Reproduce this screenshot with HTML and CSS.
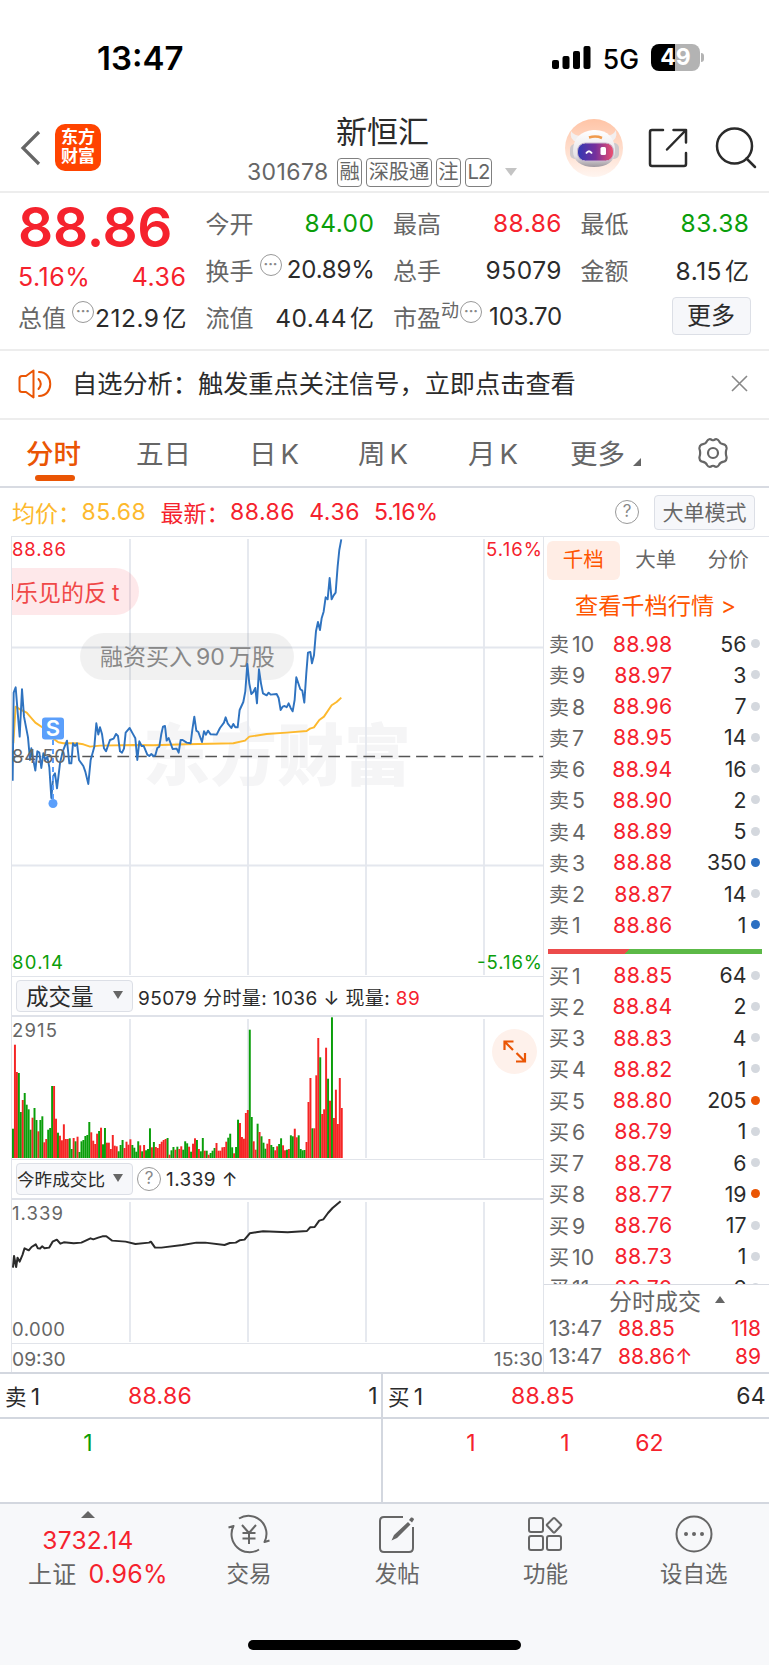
FILE: index.html
```
<!DOCTYPE html>
<html lang="zh-CN">
<head>
  <meta charset="UTF-8" />
  <meta name="viewport" content="width=device-width, initial-scale=1.0"/>
  <title>新恒汇 301678</title>
  <link rel="stylesheet" href="styles.css">
</head>
<body>
  <div class="status-bar">
    <span class="clock">13:47</span>
    <div class="status-right">
      <svg width="39" height="23" viewBox="0 0 39 23">
        <rect x="0" y="14" width="7" height="9" rx="2"/>
        <rect x="10.5" y="10" width="7" height="13" rx="2"/>
        <rect x="21" y="5" width="7" height="18" rx="2"/>
        <rect x="31.5" y="0" width="7" height="23" rx="2"/>
      </svg>
      <span class="network">5G</span>
      <div class="battery"><span>49</span></div>
      <i class="battery-tip"></i>
    </div>
  </div>

  <header>
    <svg class="back" width="22" height="36" viewBox="0 0 22 36" fill="none" stroke="#666" stroke-width="3.2"><path d="M19 2L3 18L19 34"/></svg>
    <div class="logo">东方<br>财富</div>
    <div class="stock">
      <h1>新恒汇</h1>
      <div class="stock-info">
        <span class="code">301678</span>
        <span class="tag">融</span>
        <span class="tag">深股通</span>
        <span class="tag">注</span>
        <span class="tag tag-l2">L2</span>
        <i class="caret"></i>
      </div>
    </div>
    <svg class="robot" width="60" height="60" viewBox="0 0 60 60">
      <defs>
        <linearGradient id="halo" x2="0" y2="1"><stop stop-color="#ffc4a6"/><stop offset="1" stop-color="#fff5f0"/></linearGradient>
        <linearGradient id="visor"><stop stop-color="#3039b4"/><stop offset=".5" stop-color="#76309c"/><stop offset="1" stop-color="#ef506d"/></linearGradient>
        <linearGradient id="helmet" x2="0" y2="1"><stop stop-color="#fff"/><stop offset=".7" stop-color="#e6e3e6"/><stop offset="1" stop-color="#9f989f"/></linearGradient>
      </defs>
      <circle cx="30" cy="30" r="29" fill="url(#halo)"/>
      <path d="M7 13Q5 22 13 24L18 18Q10 18 7 13M52 12Q54 22 46 24L41 18Q49 18 52 12" fill="#f3efef"/>
      <rect x="6" y="26" width="10" height="15" rx="5" fill="#cdc9cc"/>
      <rect x="45" y="25" width="10" height="16" rx="5" fill="#cdc9cc"/>
      <path d="M29 12C43 11 51 20 51 32C51 44 43 49 30 49C17 49 9 43 9 33C9 20 17 13 29 12Z" fill="url(#helmet)"/>
      <path d="M25 19.500Q32 17.500 38 20" stroke="#f09b4d" stroke-width="2.500" fill="none"/>
      <rect x="13.500" y="25" width="36" height="18" rx="8" fill="url(#visor)" stroke="#c8b8ce"/>
      <path d="M22 35.500Q25 31 28 35.500" stroke="#fff" stroke-width="1.800" fill="none"/>
      <rect x="36.500" y="29" width="5.500" height="8" rx="1.500" fill="#fff"/>
    </svg>
    <svg class="share" width="40" height="40" viewBox="0 0 40 40" fill="none" stroke="#2b2b2b" stroke-width="2.500" stroke-linecap="round" stroke-linejoin="round"><path d="M15 2H4Q2 2 2 4V36Q2 38 4 38H36Q38 38 38 36V25M25.500 2H38V14.500M38 2L19 21.500"/></svg>
    <svg class="search" width="42" height="42" viewBox="0 0 42 42" fill="none" stroke="#2b2b2b" stroke-width="2.500" stroke-linecap="round"><circle cx="19.500" cy="19" r="17.500"/><path d="M31.500 31.500L40 40"/></svg>
  </header>

  <section class="quote">
    <div class="quote-col">
      <div class="price">88.86</div>
      <div class="line change"><span>5.16%</span><span>4.36</span></div>
      <div class="line"><label>总值<i class="more-dot">···</i></label><b>212.9<em>亿</em></b></div>
    </div>
    <div class="quote-col">
      <div class="line"><label>今开</label><b class="green">84.00</b></div>
      <div class="line"><label>换手<i class="more-dot">···</i></label><b class="narrow">20.89%</b></div>
      <div class="line"><label>流值</label><b>40.44<em>亿</em></b></div>
    </div>
    <div class="quote-col">
      <div class="line"><label>最高</label><b class="red">88.86</b></div>
      <div class="line"><label>总手</label><b>95079</b></div>
      <div class="line"><label>市盈<sup>动</sup><i class="more-dot tight">···</i></label><b class="narrow">103.70</b></div>
    </div>
    <div class="quote-col">
      <div class="line"><label>最低</label><b class="green">83.38</b></div>
      <div class="line"><label>金额</label><b>8.15<em>亿</em></b></div>
      <button class="btn-more">更多</button>
    </div>
  </section>

  <div class="notice">
    <svg width="34" height="30" viewBox="0 0 34 30" fill="none" stroke="#ea5504" stroke-width="2" stroke-linejoin="round" stroke-linecap="round"><path d="M15.500 1.500L8 7H4Q1.500 7 1.500 9.500V20.500Q1.500 23 4 23H8L15.500 28.500ZM20.500 10Q25 15 20.500 20M21 3C36 3 36 27 21 27"/></svg>
    <span>自选分析：触发重点关注信号，立即点击查看</span>
    <svg class="close" width="17" height="17" viewBox="0 0 17 17" stroke="#888" stroke-width="1.600"><path d="M1 1L16 16M16 1L1 16"/></svg>
  </div>

  <nav class="tabs">
    <a class="active">分时</a>
    <a>五日</a>
    <a>日<span>K</span></a>
    <a>周<span>K</span></a>
    <a>月<span>K</span></a>
    <a class="tab-more">更多<i></i></a>
    <svg width="34" height="32" viewBox="0 0 34 32" fill="none" stroke="#666" stroke-width="2.200" stroke-linejoin="round"><circle cx="17" cy="16" r="5"/><path d="M11 4Q13 1 16 3Q17 3.500 18 3Q21 1 23 4C24 7 26 7 28.500 7.500Q31 9 30.500 12C29.500 15 29.500 17 30.500 20Q31 23 28.500 24.500C26 25 24 25 23 28Q21 31 18 29Q17 28.500 16 29Q13 31 11 28C10 25 8 25 5.500 24.500Q3 23 3.500 20C4.500 17 4.500 15 3.500 12Q3 9 5.500 7.500C8 7 10 7 11 4Z"/></svg>
  </nav>

  <div class="legend">
    <span class="avg name">均价：</span><span class="avg num">85.68</span>
    <span class="red name">最新：</span><span class="red num">88.86</span>
    <span class="red num">4.36</span><span class="red num">5.16%</span>
    <i class="help">?</i>
    <button class="btn-mode">大单模式</button>
  </div>

  <main>
    <div class="charts">
      <!-- 分时走势 -->
      <svg class="chart price-chart" width="531" height="439" viewBox="0 0 531 439">
        <text class="watermark" x="131" y="243" textLength="268">东方财富</text>
        <path class="grid" d="M118 2V438M236 2V438M354 2V438M472 2V438M0 110.500H531M0 328.500H531"/>
        <path class="base-line" d="M0 219.500H531"/>
        <polyline class="avg-line" transform="translate(-12 -7) scale(.3333)" points="40,640 47,530 60,538 80,548 106,578 130,594 150,606 160,626 175,637 190,640 230,640 250,643 270,650 300,647 400,645 460,646 560,643 700,640 735,632 748,620 800,612 860,608 920,603 930,596 942,592 958,570 972,560 995,526 1010,516 1024,503"/>
        <rect x="68" y="96" width="214" height="47" rx="23.500" fill="#000" fill-opacity=".055"/>
        <text class="bubble-text" x="88" y="127.500">融资买入<tspan dx="4">90</tspan><tspan dx="4">万股</tspan></text>
        <path d="M0 31H103.500A23.500 23.500 0 0 1 103.500 78H0Z" fill="#f5222d" fill-opacity=".1"/>
        <text class="bubble-text red-text" x="3" y="63.500">乐见的反<tspan dx="5">t</tspan></text>
        <path d="M.500 47V63" stroke="#f04848" stroke-width="1.200"/>
        <polyline class="price-line" transform="translate(-12 -7) scale(.3333)" points="38,752 41,488 47,472 59,620 66,478 72,560 84,622 90,690 94,655 100,690 106,722 112,664 118,668 124,714 130,670 136,690 142,680 148,712 154,804 160,738 165,730 171,775 180,700 188,665 201,632 208,700 214,700 219,640 225,648 231,640 237,690 250,708 256,725 265,762 272,690 283,650 289,580 295,614 300,592 306,612 312,655 318,664 330,630 341,626 348,612 354,618 360,664 366,668 372,656 377,608 389,594 400,614 406,625 412,690 418,634 425,648 431,648 442,674 448,678 454,672 460,678 466,676 472,654 478,650 484,612 489,590 495,588 500,632 506,624 512,640 518,657 530,656 536,668 542,630 548,630 560,638 572,640 577,600 583,560 589,602 595,606 606,636 612,604 618,614 624,602 632,613 650,614 660,594 672,578 677,562 683,580 694,594 700,582 706,592 713,592 719,540 730,516 736,484 742,402 748,460 754,492 760,486 766,474 771,520 777,418 783,460 789,490 800,496 806,488 812,494 830,492 836,504 842,540 848,530 854,528 860,532 866,520 872,534 878,544 884,510 889,442 901,478 907,482 913,518 919,430 924,368 931,366 936,400 942,376 948,304 954,276 960,300 965,265 971,245 977,202 983,208 989,144 995,208 1001,196 1007,188 1013,110 1018,60 1024,28"/>
        <path d="M41 203V262" stroke="#5b9ffb" stroke-width="2" stroke-dasharray="5 4"/>
        <circle cx="41" cy="266.500" r="4.500" fill="#5b9ffb"/>
        <rect x="30" y="180.500" width="22" height="22" rx="3" fill="#5b9ffb"/>
        <text class="sell-mark" x="41" y="199">S</text>
        <text class="label red-text" x="0" y="18.700" textLength="54">88.86</text>
        <text class="label red-text" x="474" y="18.700" textLength="56">5.16%</text>
        <text class="label" x="0" y="226" textLength="54">84.50</text>
        <text class="label green-text" x="0" y="432" textLength="51">80.14</text>
        <text class="label green-text" x="465" y="432" textLength="65">-5.16%</text>
      </svg>

      <div class="indicator">
        <button class="select">成交量<i></i></button>
        <span class="ind-text">95079 分时量: 1036 ↓ 现量: <span class="red">89</span></span>
      </div>
      <!-- 成交量 -->
      <svg class="chart" width="531" height="142" viewBox="0 0 531 142">
        <path class="grid" d="M118 2V141M236 2V141M354 2V141M472 2V141"/>
        <text class="label" x="0" y="19.500" textLength="45">2915</text>
        <g id="volume"></g>
        <circle cx="502.500" cy="34.500" r="22.500" fill="#fef1eb"/>
        <path d="M492.500 33V24.500H501.500M492.500 24.500L501 33M513 36V44.500H504M513 44.500L504.500 36" fill="none" stroke="#ea5504" stroke-width="2.200"/>
      </svg>

      <div class="indicator second">
        <button class="select small">今昨成交比<i></i></button>
        <i class="help">?</i>
        <span class="ind-text">1.339 ↑</span>
      </div>
      <!-- 今昨成交比 -->
      <svg class="chart" width="531" height="143" viewBox="0 0 531 143">
        <path class="grid" d="M118 2V142M236 2V142M354 2V142M472 2V142"/>
        <polyline class="ratio-line" transform="translate(-12 -39) scale(.3508 .3333)" points="37,320 40,285 46,318 50,290 56,302 64,282 70,262 82,268 90,258 102,250 108,262 114,263 120,256 127,262 140,260 150,242 162,236 172,248 182,244 210,247 232,245 258,232 266,235 280,230 292,226 303,226 320,239 358,242 386,249 425,245 430,242 442,260 460,260 520,252 560,245 585,245 640,252 655,246 672,245 683,238 697,236 712,217 730,214 750,211 820,214 875,210 884,199 897,198 910,179 922,175 935,156 948,141 971,121"/>
        <text class="label" x="0" y="20" textLength="51">1.339</text>
        <text class="label" x="0" y="135.500" textLength="53">0.000</text>
      </svg>
      <div class="time-axis"><span>09:30</span><span>15:30</span></div>
    </div>

    <aside>
      <div class="book-tabs"><a class="active">千档</a><a>大单</a><a>分价</a></div>
      <a class="book-link">查看千档行情 <span>&gt;</span></a>
      <div class="book" id="sells"></div>
      <div class="ratio-bar"></div>
      <div class="book buys" id="buys"></div>
      <div class="deals">
        <div class="deals-title">分时成交<i></i></div>
        <div class="deal"><span>13:47</span><span class="red">88.85</span><span class="red qty">118</span></div>
        <div class="deal"><span>13:47</span><span class="red">88.86↑</span><span class="red qty">89</span></div>
      </div>
    </aside>
  </main>

  <section class="queue">
    <div class="side">
      <div class="side-head"><span>卖<em>1</em></span><span class="red">88.86</span><span class="qty">1</span></div>
      <div class="orders"><span></span><span class="green">1</span></div>
    </div>
    <div class="side">
      <div class="side-head"><span>买<em>1</em></span><span class="red">88.85</span><span class="qty">64</span></div>
      <div class="orders red"><span></span><span>1</span><span>1</span><span>62</span></div>
    </div>
  </section>

  <footer>
    <div class="index">
      <i></i>
      <div class="red">3732.14</div>
      <div class="index-change">上证<span class="red">0.96%</span></div>
    </div>
    <a>
      <svg width="44" height="40" viewBox="0 0 44 40"><path d="M12 4.500A18 18 0 0 1 37.500 28L42.500 26.500M32 35.500A18 18 0 0 1 6.500 12L1.500 13.500M15 11L22 19L29 11M22 19V30M15.500 19H28.500M15.500 24.500H28.500"/></svg>
      <span>交易</span>
    </a>
    <a>
      <svg width="44" height="40" viewBox="0 0 44 40"><path d="M28 3H9Q5 3 5 7V34Q5 38 9 38H34Q38 38 38 34V13"/><path class="pen" d="M36 3.500Q38.500 3 39 5.500L37 8.500L34 6ZM33 8L35.500 10.500L22 24L16.500 26.500L19 21Z"/></svg>
      <span>发帖</span>
    </a>
    <a>
      <svg width="44" height="40" viewBox="0 0 44 40"><rect x="6" y="4" width="14" height="14" rx="2"/><rect x="6" y="22" width="14" height="14" rx="2"/><rect x="24" y="22" width="14" height="14" rx="2"/><path d="M30 4.500Q31 3.500 32 4.500L38 10.500Q38.500 11 38 11.500L32 18Q31 19 30 18L24 11.500Q23.500 11 24 10.500Z"/></svg>
      <span>功能</span>
    </a>
    <a>
      <svg width="44" height="40" viewBox="0 0 44 40"><circle cx="22" cy="20" r="17.500"/><path class="dots" d="M14 20h.01M22 20h.01M30 20h.01"/></svg>
      <span>设自选</span>
    </a>
    <div class="home-bar"></div>
  </footer>

  <script src="app.js"></script>
</body>
</html>
```
FILE: styles.css
```
* {
  box-sizing: border-box;
}

body {
  margin: 0;
  width: 769px;
  height: 1665px;
  overflow: hidden;
  background-color: #ffffff;
  color: #2b2b2b;
  font-family: Inter, 'Noto Sans CJK SC', sans-serif;
}

i, em {
  font-style: normal;
}

button {
  font-family: inherit;
  padding: 0;
  color: #2b2b2b;
  background: #f6f7fa;
  border: 1.5px solid #dcdfe6;
  border-radius: 4px;
}

svg {
  display: block;
  flex: none;
}

.red { color: #f5222d; }
.green { color: #0a9e0a; }

/* 状态栏 */
.status-bar {
  display: flex;
  justify-content: space-between;
  align-items: center;
  height: 115px;
  padding: 0 65px 0 97px;
  color: #000;
}

.clock {
  font-size: 33px;
  font-weight: 600;
}

.status-right {
  display: flex;
  align-items: center;
}

.network {
  font-size: 26.5px;
  font-weight: 500;
  margin: 2px 12px 0 12px;
}

.battery {
  width: 49px;
  height: 27px;
  border-radius: 8px;
  background: linear-gradient(90deg, #000 49%, #b3b3b3 49%);
  color: #fff;
  font-size: 23px;
  font-weight: 700;
  line-height: 27px;
  text-align: center;
}

.battery-tip {
  width: 3px;
  height: 9px;
  margin-left: 1px;
  border-radius: 0 4px 4px 0;
  background: #b3b3b3;
}

/* 顶部 */
header {
  display: flex;
  height: 78px;
  border-bottom: 2px solid #ededed;
}

.back {
  margin: 15px 0 0 20px;
}

.logo {
  width: 46px;
  height: 47px;
  margin: 9px 0 0 13px;
  padding-top: 4px;
  border-radius: 10px;
  background: #ff4400;
  color: #fff;
  font-size: 17px;
  font-weight: 700;
  line-height: 19px;
  text-align: center;
}

.stock {
  width: 273px;
  margin-left: 146px;
}

h1 {
  margin: 0;
  width: 271px;
  height: 42px;
  font-size: 31px;
  font-weight: 400;
  line-height: 33px;
  text-align: center;
}

.stock-info {
  display: flex;
  align-items: center;
  gap: 4px;
  height: 30px;
  color: #666;
}

.code {
  font-size: 23px;
  width: 86px;
  letter-spacing: 0.4px;
}

.tag {
  height: 29px;
  padding: 0 1.5px;
  border: 1.5px solid #808080;
  border-radius: 4px;
  font-size: 20.3px;
  line-height: 25px;
  letter-spacing: -0.1px;
}

.tag-l2 {
  letter-spacing: -1px;
}

.caret {
  margin-left: 9px;
  border: 6.5px solid transparent;
  border-top: 8px solid #c4c4c4;
  border-bottom: 0;
}

.robot { margin: 3px 0 0 44px; }
.share { margin: 13px 0 0 24px; }
.search { margin: 12px 0 0 27px; }

/* 行情 */
.quote {
  display: grid;
  grid-template-columns: repeat(4, 168.5px);
  column-gap: 19px;
  height: 158px;
  padding: 6px 0 0 18px;
  border-bottom: 2px solid #ededed;
}

.line {
  display: flex;
  justify-content: space-between;
  align-items: center;
  height: 47px;
  font-size: 24px;
  white-space: nowrap;
}

.line label {
  display: flex;
  align-items: center;
  color: #666;
}

.line b {
  font-weight: 400;
  font-size: 24.5px;
  letter-spacing: 0.5px;
  margin-right: -0.5px;
}

.line b.narrow {
  font-size: 24px;
  letter-spacing: -0.2px;
}

.line em {
  margin-left: 3px;
  font-size: 24px;
}

.line sup {
  font-size: 18px;
  line-height: 18px;
  margin-bottom: 12px;
}

.price {
  height: 54px;
  color: #f5222d;
  font-size: 55px;
  font-weight: 600;
  line-height: 56px;
  letter-spacing: -0.3px;
}

.change {
  height: 40px;
  padding-top: 8px;
  color: #f5222d;
  font-size: 25px;
  letter-spacing: 0.5px;
}

.more-dot {
  width: 22px;
  height: 22px;
  margin: 0 0 10px 6px;
  border: 1.5px solid #999;
  border-radius: 50%;
  color: #888;
  font-size: 14px;
  font-weight: 700;
  line-height: 18px;
  text-align: center;
}

.more-dot.tight {
  margin-left: 1px;
}

.btn-more {
  display: block;
  width: 79px;
  height: 38px;
  margin: 4px 0 0 91px;
  font-size: 24px;
  line-height: 34px;
}

/* 提示条 */
.notice {
  display: flex;
  align-items: center;
  height: 69px;
  padding: 0 21px 2px 18px;
  border-bottom: 2px solid #ededed;
  font-size: 25.2px;
}

.notice span {
  margin: -3px 0 0 20px;
}

.close {
  margin-left: auto;
}

/* 周期切换 */
.tabs {
  display: flex;
  align-items: center;
  height: 68px;
  padding-left: 26px;
  border-bottom: 2px solid #d8dbe2;
  color: #666;
  font-size: 27.5px;
}

.tabs a {
  position: relative;
  top: -1px;
  width: 110px;
  white-space: nowrap;
}

.tabs a:nth-child(2) { width: 113px; }
.tabs a:nth-child(3) { width: 109px; }
.tabs a:nth-child(5) { width: 102px; }

.tabs a span {
  margin-left: 4px;
}

.tabs .active {
  color: #ea5504;
  font-weight: 500;
}

.tabs .active::after {
  content: '';
  position: absolute;
  left: 9px;
  bottom: -9px;
  width: 40px;
  height: 6px;
  border-radius: 3px;
  background: #ea5504;
}

.tabs .tab-more {
  display: flex;
  align-items: center;
  width: 126px;
}

.tab-more i {
  margin: 19px 0 0 8px;
  border-left: 8px solid transparent;
  border-bottom: 8px solid #666;
}

/* 均价 最新 */
.legend {
  display: flex;
  align-items: center;
  height: 48px;
  padding: 0 14px 0 12px;
  font-size: 23px;
}

.avg { color: #fdb92e; }

.legend span {
  flex: none;
}

.legend .name {
  width: 69.5px;
}

.legend .num {
  margin-right: 14px;
  letter-spacing: 0.55px;
}

.legend .num:nth-of-type(6) {
  letter-spacing: 0;
}

.help {
  width: 24px;
  height: 24px;
  border: 1.5px solid #999;
  border-radius: 50%;
  color: #888;
  font-size: 17px;
  line-height: 21px;
  text-align: center;
}

.legend .help {
  margin-left: auto;
  margin-right: 15px;
}

.btn-mode {
  width: 101px;
  height: 35px;
  color: #666;
  font-size: 21px;
  line-height: 31px;
}

/* 图表 */
main {
  display: flex;
  height: 836px;
}

.charts {
  width: 533px;
  margin-left: 11px;
  border-top: 1px solid #e1e4ea;
  border-left: 1px solid #e1e4ea;
  border-right: 1px solid #e1e4ea;
}

.chart {
  border-bottom: 1px solid #e1e4ea;
  box-sizing: content-box;
}

.grid {
  fill: none;
  stroke: #e4e7ee;
  stroke-width: 1.8;
}

.base-line {
  stroke: #555;
  stroke-width: 1.6;
  stroke-dasharray: 11.7 5.87;
}

.price-line, .avg-line, .ratio-line {
  fill: none;
  stroke: #2f73c0;
  stroke-width: 5.8;
  stroke-linejoin: round;
}

.avg-line { stroke: #fdb92e; }
.ratio-line { stroke: #2b2b2b; }

.label {
  fill: #666;
  font-size: 18.5px;
}

.red-text { fill: #f5222d; }
.green-text { fill: #0a9e0a; }

.watermark {
  fill: #f5f5f6;
  font-size: 67px;
  font-weight: 900;
}

.bubble-text {
  fill: #888;
  font-size: 23px;
}

.bubble-text.red-text { fill: #f04848; }

.sell-mark {
  fill: #fff;
  font-size: 22px;
  font-weight: 600;
  text-anchor: middle;
}

.bar-up { fill: #f52525; }
.bar-down { fill: #0a9e0a; }

.indicator {
  display: flex;
  align-items: center;
  height: 40px;
  padding-left: 4px;
  border-bottom: 2px solid #dfe2e9;
}

.select {
  display: flex;
  align-items: center;
  justify-content: space-between;
  width: 117px;
  height: 32px;
  padding: 0 9px 2px;
  font-size: 22.5px;
  white-space: nowrap;
}

.select.small {
  padding-left: 0;
  font-size: 17.6px;
}

.select i {
  border: 5px solid transparent;
  border-top: 8px solid #666;
  border-bottom: 0;
}

.ind-text {
  margin-left: 5px;
  font-size: 19px;
  letter-spacing: 0.4px;
  white-space: nowrap;
}

.indicator .help {
  margin-left: 4px;
}

.time-axis {
  display: flex;
  justify-content: space-between;
  height: 28px;
  color: #666;
  font-size: 19.3px;
  line-height: 30px;
}

/* 五档盘口 */
aside {
  flex: 1;
  display: flex;
  flex-direction: column;
  border-top: 1px solid #e1e4ea;
}

.book-tabs {
  display: flex;
  margin: 4px 0 0 3px;
}

.book-tabs a {
  width: 72.5px;
  height: 39px;
  border-radius: 6px;
  color: #666;
  font-size: 20.5px;
  line-height: 38px;
  text-align: center;
}

.book-tabs .active {
  background: #ffede5;
  color: #ff5500;
}

.book-link {
  height: 48px;
  padding-left: 31px;
  color: #ff5500;
  font-size: 23.2px;
  line-height: 53px;
  white-space: nowrap;
}

.book-row {
  display: grid;
  grid-template-columns: 50px 73.5px 74px 13px;
  align-items: center;
  height: 31.25px;
  padding-left: 5px;
  font-size: 21.3px;
}

.book-row .name {
  color: #666;
  font-size: 20px;
  white-space: nowrap;
}

.name span {
  margin-left: 3px;
  font-size: 21.3px;
}

.book-row .cost {
  color: #f5222d;
  letter-spacing: 0.3px;
  text-align: right;
}

.book-row .qty {
  text-align: right;
}

.dot {
  width: 9px;
  height: 9px;
  margin-left: 4px;
  border-radius: 50%;
  background: #d4d8de;
}

.dot.blue { background: #2b6fc2; }
.dot.orange { background: #ea5504; }

.ratio-bar {
  flex: none;
  width: 214px;
  height: 5px;
  margin: 8px 0 6px 4px;
  background: linear-gradient(135deg, #ec4b4b 37%, #5cb947 37%);
}

.buys {
  flex: 1;
  overflow: hidden;
}

.deals {
  height: 88px;
  border-top: 1.5px solid #d8dbe2;
}

.deals-title {
  display: flex;
  align-items: center;
  height: 29px;
  padding-left: 65px;
  color: #666;
  font-size: 23px;
}

.deals-title i {
  margin-left: 14px;
  border: 5px solid transparent;
  border-bottom: 7px solid #666;
  border-top: 0;
}

.deal {
  display: flex;
  align-items: center;
  height: 28.5px;
  padding: 0 8px 0 5px;
  font-size: 21px;
}

.deal span:first-child {
  width: 69px;
  color: #666;
}

.deal .qty {
  margin-left: auto;
}

/* 买卖队列 */
.queue {
  display: flex;
  height: 130px;
  border-top: 2px solid #d3d7df;
}

.side {
  width: 383px;
  border-right: 2px solid #d3d7df;
}

.side:last-child {
  flex: 1;
  border-right: 0;
}

.side-head {
  display: flex;
  align-items: center;
  height: 45px;
  padding: 0 5px 0 5px;
  border-bottom: 2px solid #d3d7df;
  font-size: 23px;
  letter-spacing: 0.3px;
}

.side-head span:first-child {
  width: 123px;
  font-size: 21.5px;
}

.side-head em {
  margin-left: 4px;
  font-size: 23px;
}

.side-head .qty {
  margin-left: auto;
  margin-right: -2px;
}

.orders {
  display: grid;
  grid-template-columns: 41px 94px 94px 75px;
  padding-top: 10px;
  font-size: 23px;
  text-align: center;
}

/* 底部导航 */
footer {
  position: relative;
  display: flex;
  height: 163px;
  padding-left: 12px;
  border-top: 2px solid #d3d7df;
  background: #f7f8fa;
  color: #666;
}

footer a {
  width: 148.2px;
  padding-top: 10px;
  font-size: 22.5px;
  line-height: 36px;
  text-align: center;
}

footer a svg {
  margin: 0 auto 2px;
  fill: none;
  stroke: #666;
  stroke-width: 2;
  stroke-linejoin: round;
}

footer .pen {
  fill: #666;
  stroke: none;
}

footer .dots {
  stroke-width: 4;
  stroke-linecap: round;
}

.index {
  width: 152px;
  margin-right: 11px;
  padding-top: 7px;
  font-size: 24.5px;
  line-height: 34px;
  text-align: center;
  letter-spacing: 0.3px;
  white-space: nowrap;
}

.index i {
  display: block;
  width: 0;
  margin: 0 auto 5px;
  border: 7px solid transparent;
  border-bottom: 7px solid #666;
  border-top: 0;
}

.index-change {
  padding-left: 16px;
  font-size: 24px;
}

.index-change span {
  margin-left: 12px;
  font-size: 25px;
}

.home-bar {
  position: absolute;
  left: 248px;
  bottom: 15px;
  width: 273px;
  height: 10px;
  border-radius: 5px;
  background: #000;
}
```
FILE: app.js
```
// 成交量: r = 涨, g = 跌
const volume = 'g88 r340 r258 g255 g138 r174 g195 g160 g146 g85 r121 g150 g114 r80 g114 g125 r47 r57 g85 g90 g216 r216 r118 g76 r67 r53 r101 r57 r57 g59 g27 r60 g50 r64 g18 g50 g54 g66 g69 g108 r77 r52 r42 r73 g81 r91 g41 g90 r46 r46 r27 r69 r37 r35 g20 g39 g54 r30 r49 r40 r56 g39 g31 g19 g50 r38 g20 r39 g23 g27 g89 r32 g48 r33 r30 r42 r49 r54 r57 g60 r10 g23 g33 r25 g34 r27 r35 g25 g50 g44 r34 g19 r43 r59 g54 r27 g20 g60 r22 g22 r10 g15 g22 g30 r45 r22 r22 r32 r33 r49 g61 g73 g32 r14 g33 g115 r105 r63 r58 r135 r144 g385 g123 r50 r25 g103 r78 g65 g46 g28 r43 r57 g39 g33 r23 r35 g42 g59 r38 r23 g25 r27 g68 g65 r88 r62 g68 g27 g23 g24 r48 r168 r240 g89 r89 r248 r360 g302 r132 r146 r331 g238 r172 g422 r120 r205 r102 r240 r150'.split(' ');

document.getElementById('volume').innerHTML = volume.map((v, i) => {
  const h = v.slice(1) / 3;
  const cls = v[0] === 'r' ? 'bar-up' : 'bar-down';
  return `<rect class="${cls}" x="${(i * 1.957).toFixed(2)}" y="${(141 - h).toFixed(1)}" width="1.96" height="${h.toFixed(1)}"/>`;
}).join('');

const sells = [[10, '88.98', 56], [9, '88.97', 3], [8, '88.96', 7], [7, '88.95', 14], [6, '88.94', 16], [5, '88.90', 2], [4, '88.89', 5], [3, '88.88', 350, 'blue'], [2, '88.87', 14], [1, '88.86', 1, 'blue']];
const buys = [[1, '88.85', 64], [2, '88.84', 2], [3, '88.83', 4], [4, '88.82', 1], [5, '88.80', 205, 'orange'], [6, '88.79', 1], [7, '88.78', 6], [8, '88.77', 19, 'orange'], [9, '88.76', 17], [10, '88.73', 1], [11, '88.70', 6]];

function renderBook(id, side, rows) {
  document.getElementById(id).innerHTML = rows.map(([n, price, qty, color]) =>
    `<div class="book-row"><span class="name">${side}<span>${n}</span></span><span class="cost">${price}</span><span class="qty">${qty}</span><i class="dot ${color || ''}"></i></div>`
  ).join('');
}

renderBook('sells', '卖', sells);
renderBook('buys', '买', buys);
```
